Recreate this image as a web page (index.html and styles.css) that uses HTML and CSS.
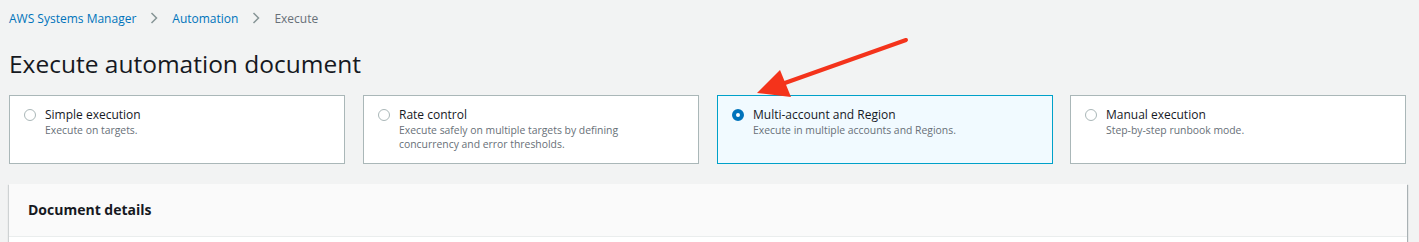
FILE: index.html
```html
<!DOCTYPE html>
<html>
<head>
<meta charset="utf-8">
<link rel="stylesheet" href="styles.css">
</head>
<body>
<div class="page">
  <nav class="breadcrumbs">
    <a class="crumb-link">AWS Systems Manager</a>
    <svg class="chev" width="8" height="12" viewBox="0 0 8 12"><path d="M1.5 1 L6.5 6 L1.5 11" fill="none" stroke="#879596" stroke-width="1.5"/></svg>
    <a class="crumb-link">Automation</a>
    <svg class="chev" width="8" height="12" viewBox="0 0 8 12"><path d="M1.5 1 L6.5 6 L1.5 11" fill="none" stroke="#879596" stroke-width="1.5"/></svg>
    <span class="crumb-current">Execute</span>
  </nav>
  <h1 class="title">Execute automation document</h1>
  <div class="tiles">
    <div class="tile">
      <span class="radio"></span>
      <div class="tile-text">
        <div class="tile-label">Simple execution</div>
        <div class="tile-desc">Execute on targets.</div>
      </div>
    </div>
    <div class="tile">
      <span class="radio"></span>
      <div class="tile-text">
        <div class="tile-label">Rate control</div>
        <div class="tile-desc">Execute safely on multiple targets by defining<br>concurrency and error thresholds.</div>
      </div>
    </div>
    <div class="tile tile-selected">
      <span class="radio radio-checked"></span>
      <div class="tile-text">
        <div class="tile-label">Multi-account and Region</div>
        <div class="tile-desc">Execute in multiple accounts and Regions.</div>
      </div>
    </div>
    <div class="tile">
      <span class="radio"></span>
      <div class="tile-text">
        <div class="tile-label">Manual execution</div>
        <div class="tile-desc">Step-by-step runbook mode.</div>
      </div>
    </div>
  </div>
  <section class="panel">
    <div class="panel-header">Document details</div>
    <div class="panel-body"></div>
  </section>
</div>
<svg class="arrow" width="1419" height="242" viewBox="0 0 1419 242">
  <line x1="906" y1="40" x2="782" y2="84" stroke="#f4331b" stroke-width="4" stroke-linecap="round"/>
  <polygon points="757,93 780,70 791,97" fill="#f4331b"/>
</svg>
</body>
</html>
```

FILE: styles.css
```css
* { box-sizing: border-box; }
html, body {
  margin: 0;
  padding: 0;
  background: #f2f3f3;
  font-family: "Open Sans", "Noto Sans", "Liberation Sans", sans-serif;
  color: #16191f;
}
.page {
  padding: 9px 12px 0 9px;
  position: relative;
}
.breadcrumbs {
  display: flex;
  align-items: center;
  height: 18px;
  font-size: 12px;
}
.crumb-link { color: #0073bb; }
.crumb-current { color: #687078; }
.chev { margin: 0 14px 0 14px; }
.title {
  margin: 21px 0 0 0;
  font-size: 24.5px;
  font-weight: 400;
  line-height: 32px;
  height: 32px;
  letter-spacing: 0;
}
.tiles {
  display: flex;
  gap: 18px;
  margin-top: 15px;
}
.tile {
  width: 336px;
  height: 69px;
  background: #fff;
  border: 1px solid #aab7b8;
  display: flex;
  align-items: flex-start;
  padding: 11px 14px;
}
.tile:last-child { margin-left: -1px; }
.tile-selected {
  background: #f1faff;
  border-color: #00a1c9;
}
.radio {
  width: 12px;
  height: 12px;
  border-radius: 50%;
  border: 1px solid #aab7b8;
  background: #fff;
  flex: none;
  margin-top: 2px;
  margin-right: 9px;
}
.radio-checked {
  border: 4px solid #0073bb;
  background: #fff;
}
.tile-label {
  font-size: 12px;
  line-height: 16px;
}
.tile-desc {
  font-size: 10.4px;
  line-height: 14px;
  color: #687078;
}
.panel {
  margin-top: 20px;
  background: #fff;
  box-shadow: 1px 1px 1px 0 rgba(0,28,36,0.3), -1px 1px 1px 0 rgba(0,28,36,0.15);
}
.panel-header {
  background: #fafafa;
  height: 53px;
  border-bottom: 1px solid #eaeded;
  padding: 16px 19px;
  font-size: 14px;
  font-weight: 700;
  line-height: 20px;
}
.panel-body {
  height: 20px;
}
.arrow {
  position: absolute;
  left: 0;
  top: 0;
  pointer-events: none;
}
```
